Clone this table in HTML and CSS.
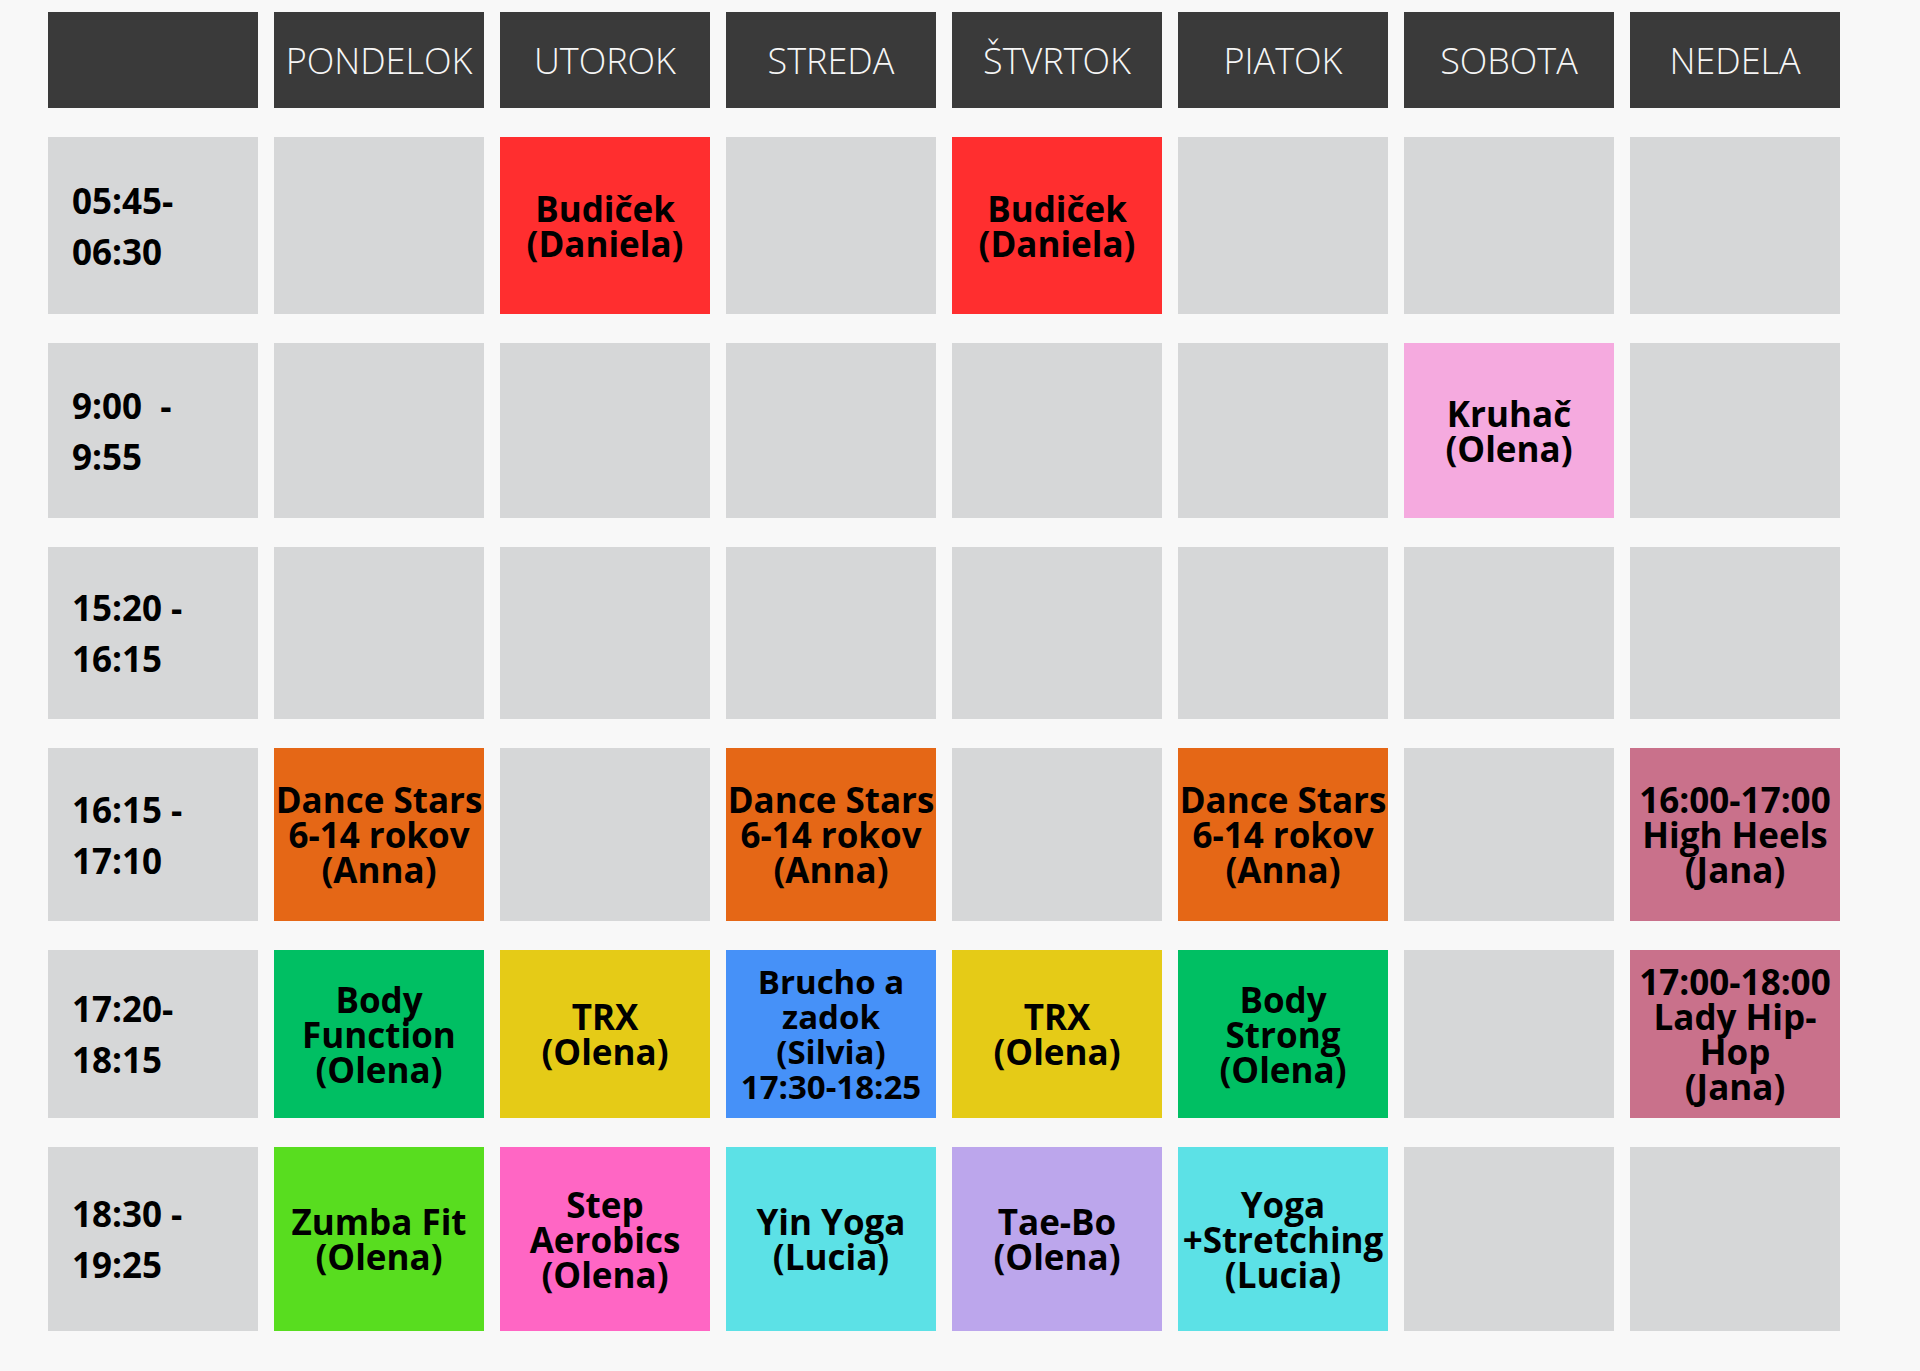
FILE: index.html
```html
<!DOCTYPE html>
<html lang="sk">
<head>
<meta charset="utf-8">
<title>Rozvrh</title>
<link rel="stylesheet" href="styles.css">
</head>
<body>
<div class="schedule">
  <div class="head"></div>
  <div class="head">PONDELOK</div>
  <div class="head">UTOROK</div>
  <div class="head">STREDA</div>
  <div class="head">ŠTVRTOK</div>
  <div class="head">PIATOK</div>
  <div class="head">SOBOTA</div>
  <div class="head">NEDELA</div>

  <div class="time"><span>05:45-</span><span>06:30</span></div>
  <div class="cell"></div>
  <div class="cell red"><span>Budiček</span><span>(Daniela)</span></div>
  <div class="cell"></div>
  <div class="cell red"><span>Budiček</span><span>(Daniela)</span></div>
  <div class="cell"></div>
  <div class="cell"></div>
  <div class="cell"></div>

  <div class="time"><span>9:00&nbsp; -</span><span>9:55</span></div>
  <div class="cell"></div>
  <div class="cell"></div>
  <div class="cell"></div>
  <div class="cell"></div>
  <div class="cell"></div>
  <div class="cell rose"><span>Kruhač</span><span>(Olena)</span></div>
  <div class="cell"></div>

  <div class="time"><span>15:20 -</span><span>16:15</span></div>
  <div class="cell"></div>
  <div class="cell"></div>
  <div class="cell"></div>
  <div class="cell"></div>
  <div class="cell"></div>
  <div class="cell"></div>
  <div class="cell"></div>

  <div class="time"><span>16:15 -</span><span>17:10</span></div>
  <div class="cell orange"><span>Dance Stars</span><span>6-14 rokov</span><span>(Anna)</span></div>
  <div class="cell"></div>
  <div class="cell orange"><span>Dance Stars</span><span>6-14 rokov</span><span>(Anna)</span></div>
  <div class="cell"></div>
  <div class="cell orange"><span>Dance Stars</span><span>6-14 rokov</span><span>(Anna)</span></div>
  <div class="cell"></div>
  <div class="cell mauve"><span>16:00-17:00</span><span>High Heels</span><span>(Jana)</span></div>

  <div class="time"><span>17:20-</span><span>18:15</span></div>
  <div class="cell green"><span>Body</span><span>Function</span><span>(Olena)</span></div>
  <div class="cell yellow"><span>TRX</span><span>(Olena)</span></div>
  <div class="cell blue"><span>Brucho a</span><span>zadok</span><span>(Silvia)</span><span>17:30-18:25</span></div>
  <div class="cell yellow"><span>TRX</span><span>(Olena)</span></div>
  <div class="cell green"><span>Body</span><span>Strong</span><span>(Olena)</span></div>
  <div class="cell"></div>
  <div class="cell mauve"><span>17:00-18:00</span><span>Lady Hip-</span><span>Hop</span><span>(Jana)</span></div>

  <div class="time"><span>18:30 -</span><span>19:25</span></div>
  <div class="cell lime"><span>Zumba Fit</span><span>(Olena)</span></div>
  <div class="cell hotpink"><span>Step</span><span>Aerobics</span><span>(Olena)</span></div>
  <div class="cell cyan"><span>Yin Yoga</span><span>(Lucia)</span></div>
  <div class="cell lavender"><span>Tae-Bo</span><span>(Olena)</span></div>
  <div class="cell cyan"><span>Yoga</span><span>+Stretching</span><span>(Lucia)</span></div>
  <div class="cell"></div>
  <div class="cell"></div>
</div>
</body>
</html>
```

FILE: styles.css
```css
html, body {
  margin: 0;
  padding: 0;
  background: #f8f8f8;
}

body {
  min-height: 1371px;
  font-family: "Open Sans", "Noto Sans", "DejaVu Sans", sans-serif;
}

.schedule {
  display: grid;
  grid-template-columns: repeat(8, 210px);
  grid-template-rows: 96px 177px 175px 172px 173px 168px 184px;
  column-gap: 16px;
  row-gap: 29px;
  padding: 12px 0 0 48px;
}

.head {
  background: #3a3a3a;
  color: #f6f6f6;
  font-weight: 300;
  font-size: 36px;
  display: flex;
  align-items: center;
  justify-content: center;
}

.time {
  background: #d6d7d8;
  color: #000;
  font-weight: 700;
  font-size: 35px;
  line-height: 51px;
  display: flex;
  flex-direction: column;
  justify-content: center;
  align-items: flex-start;
  padding-left: 24px;
  white-space: pre;
}

.cell {
  background: #d6d7d8;
  color: #000;
  font-weight: 700;
  font-size: 35px;
  line-height: 35px;
  display: flex;
  flex-direction: column;
  justify-content: center;
  align-items: center;
  text-align: center;
}

.cell span,
.time span {
  display: block;
  white-space: nowrap;
}

.red { background: #ff2e2f; }
.rose { background: #f5aadf; }
.orange { background: #e56716; }
.mauve { background: #c9718b; }
.green { background: #00bf63; }
.yellow { background: #e5cb17; }
.blue { background: #4691f8; font-size: 33px; }
.lime { background: #58dd1f; }
.hotpink { background: #ff66c4; }
.cyan { background: #5ce1e6; }
.lavender { background: #bca6ec; }
```
